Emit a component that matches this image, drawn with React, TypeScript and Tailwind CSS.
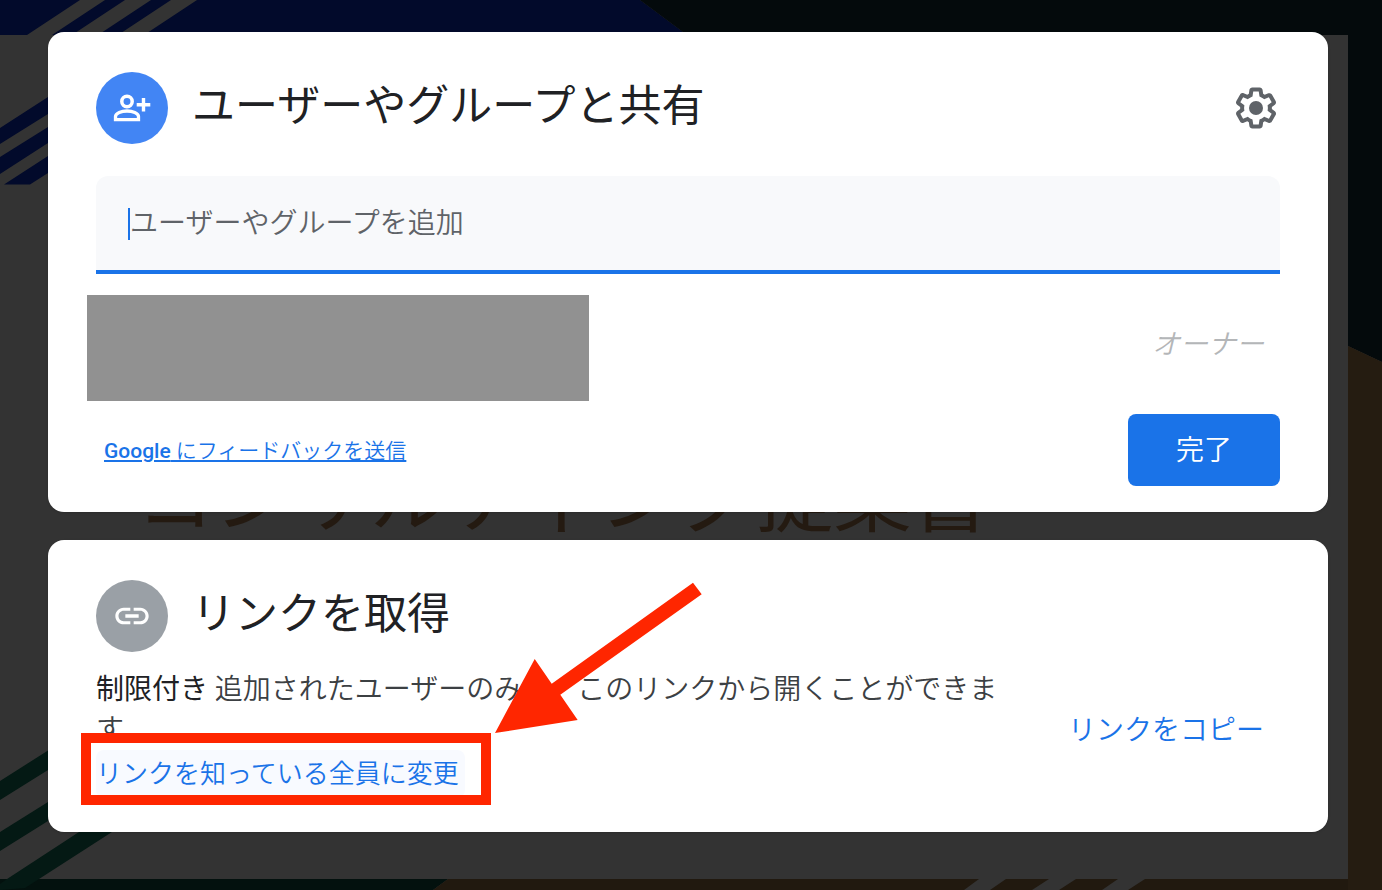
import { useState } from 'react';
import { MdLink } from 'react-icons/md';

function SlideBackground() {
  return (
    <svg
      className="absolute inset-0 h-full w-full"
      viewBox="0 0 1382 890"
      preserveAspectRatio="xMinYMin slice"
      aria-hidden="true"
    >
      <rect width="1382" height="890" fill="#333333" />

      {/* Top band */}
      <path d="M0 0H640L687 35H0Z" fill="#020a2b" />
      <path d="M640 0H1382V362L1348 346V35H687Z" fill="#040a0c" />
      <path d="M80 0H105L52 35H27ZM125 0H151L98 35H72ZM171 0H197L144 35H118Z" fill="#333333" />

      {/* Navy stripes */}
      <path d="M0 128L48 97V114L0 144ZM0 157L48 127V143L0 174ZM4 184.500L48 156V173L30 184.500Z" fill="#020a2b" />

      {/* Green stripes and bottom band */}
      <path d="M0 781L48 750.500V770L0 800ZM0 832L48 802V821L0 851ZM79 832H112L39 879H7Z" fill="#041914" />
      <path d="M0 879H448L433 890H0Z" fill="#03110e" />
      <path d="M448 879H1348V890H433Z" fill="#21190f" />
      <path d="M7 879H39L25 888L0 890V884Z" fill="#041914" />
      <path d="M1348 346L1382 362V890H1348Z" fill="#251c11" />
      <path d="M979 879H1006L990 890H964ZM1049 879H1076L1059 890H1032ZM1118 879H1145L1128 890H1102Z" fill="#333333" />

      <text x="136" y="526" fontSize="78" fill="#241a11">
        コンサルティング提案書
      </text>
    </svg>
  );
}

function PersonAddIcon() {
  return (
    <svg className="h-10 w-10" viewBox="0 0 40 40" fill="none" stroke="white" aria-hidden="true">
      <circle cx="15" cy="13.500" r="5.200" strokeWidth="3.500" />
      <path d="M3.500 31.700V28.600C3.500 25.200 9.500 23 15 23S26.500 25.200 26.500 28.600V31.700Z" strokeWidth="3.300" />
      <path d="M31.500 10V23.500M24.700 16.700H38.300" strokeWidth="3.400" />
    </svg>
  );
}

function GearIcon() {
  return (
    <svg className="h-12 w-12" viewBox="0 0 24 24" fill="#5f6368" aria-hidden="true">
      <path d="M13.850 22.250h-3.700c-.74 0-1.360-.54-1.450-1.270l-.27-1.890c-.27-.14-.53-.29-.79-.46l-1.800.72c-.7.26-1.470-.03-1.810-.65L2.200 15.530c-.35-.66-.2-1.440.36-1.880l1.530-1.190c-.01-.15-.02-.3-.02-.46 0-.15.01-.31.02-.46l-1.520-1.190c-.59-.45-.74-1.260-.37-1.880l1.850-3.190c.34-.62 1.110-.9 1.790-.63l1.810.73c.26-.17.52-.32.78-.46l.27-1.910c.09-.7.71-1.250 1.440-1.250h3.700c.74 0 1.360.54 1.450 1.270l.27 1.890c.27.14.53.29.79.46l1.800-.72c.71-.26 1.480.03 1.820.65l1.840 3.180c.36.66.2 1.440-.36 1.880l-1.520 1.190c.01.15.02.3.02.46s-.01.31-.02.46l1.520 1.190c.56.45.72 1.230.37 1.860l-1.860 3.220c-.34.62-1.110.9-1.800.63l-1.800-.72c-.26.17-.52.32-.78.46l-.27 1.910c-.1.68-.72 1.220-1.460 1.220zm-3.230-2h2.760l.37-2.550.53-.22c.44-.18.88-.44 1.340-.78l.45-.34 2.380.96 1.380-2.400-2.030-1.580.07-.56c.03-.26.06-.51.06-.78s-.03-.53-.06-.78l-.07-.56 2.030-1.580-1.390-2.400-2.390.96-.45-.35c-.42-.32-.87-.58-1.330-.77l-.52-.22-.37-2.550h-2.760l-.37 2.550-.53.21c-.44.19-.88.44-1.340.79l-.45.33-2.380-.95-1.390 2.390 2.030 1.580-.07.56a7 7 0 0 0-.06.79c0 .26.02.53.06.78l.07.56-2.030 1.580 1.380 2.400 2.390-.96.45.35c.43.33.86.58 1.330.77l.53.22.38 2.550z" />
      <circle cx="12" cy="12" r="3.500" />
    </svg>
  );
}

export default function App() {
  const [people, setPeople] = useState('');

  return (
    <div
      lang="ja"
      className="relative min-h-screen overflow-hidden bg-[#333333] font-[Roboto,'Noto_Sans_CJK_JP',sans-serif] text-[#202124]"
    >
      <SlideBackground />

      <main className="relative flex flex-col gap-7 pt-8 pr-[54px] pb-14 pl-12">
        {/* Share with people and groups */}
        <section className="rounded-2xl bg-white px-12 pt-10 pb-[26px] shadow-sm">
          <header className="flex items-center">
            <div className="flex h-18 w-18 items-center justify-center rounded-full bg-[#4285f4]">
              <PersonAddIcon />
            </div>
            <h1 className="ml-6 pb-1 text-[43px] leading-[60px]">ユーザーやグループと共有</h1>
            <button type="button" aria-label="設定" className="ml-auto">
              <GearIcon />
            </button>
          </header>

          <div className="mt-8 flex h-[98px] items-center rounded-t-xl border-b-4 border-[#1a73e8] bg-[#f8f9fb] px-8 pt-0.5">
            {people === '' && <span className="h-8 w-0.5 bg-[#1a73e8]" />}
            <input
              type="text"
              aria-label="ユーザーやグループを追加"
              placeholder="ユーザーやグループを追加"
              value={people}
              onChange={(e) => setPeople(e.target.value)}
              className="min-w-0 flex-1 bg-transparent text-[28px] leading-10 font-[350] outline-none placeholder:text-[#5f6368]"
            />
          </div>

          <div className="mt-[21px] flex items-center justify-between">
            <div className="-ml-[9px] h-[106px] w-[502px] bg-[#919191]" />
            <span className="pr-4 pb-1.5 text-[28px] leading-10 font-[350] text-[#b4b6b8] italic">オーナー</span>
          </div>

          <footer className="mt-[13px] flex items-center justify-between">
            <a href="#feedback" className="ml-2 pt-0.5 text-[21px] leading-8 font-[350] text-[#1a73e8] underline">
              <span className="font-medium">Google</span> にフィードバックを送信
            </a>
            <button
              type="button"
              className="h-18 w-[152px] rounded-lg bg-[#1a73e8] pt-0.5 text-[28px] font-[350] text-white"
            >
              完了
            </button>
          </footer>
        </section>

        {/* Get link */}
        <section className="relative rounded-2xl bg-white px-12 pt-10 pb-[34px] shadow-sm">
          <header className="flex items-center">
            <div className="flex h-18 w-18 items-center justify-center rounded-full bg-[#9aa0a6]">
              <MdLink className="h-10 w-10 text-white" />
            </div>
            <h2 className="ml-6 pb-1 text-[43px] leading-[60px]">リンクを取得</h2>
          </header>

          <div className="mt-[18px] flex items-center justify-between">
            <div className="max-w-[920px]">
              <p className="text-[28px] leading-10 font-[350] text-[#3c4043]">
                <span className="font-normal text-[#202124]">制限付き</span> 追加されたユーザーのみで、このリンクから開くことができます
              </p>
              <div className="relative flex w-fit">
                <button
                  type="button"
                  className="h-12 rounded-lg bg-[#f8faff] pr-1.5 text-[26px] font-[350] text-[#1a73e8]"
                >
                  リンクを知っている全員に変更
                </button>
                <span className="absolute -top-[17px] -right-[26px] -bottom-[7px] -left-[15px] border-10 border-[#ff2600]" />
              </div>
            </div>
            <button
              type="button"
              className="pr-4 pb-1.5 text-[28px] leading-10 font-[350] whitespace-nowrap text-[#1a73e8]"
            >
              リンクをコピー
            </button>
          </div>

          {/* Arrow pointing at the change link */}
          <svg
            className="pointer-events-none absolute top-10 left-[446px]"
            width="210"
            height="156"
            viewBox="0 0 210 156"
            aria-hidden="true"
          >
            <path
              d="M1 153L40.700 79L57.700 103.700L199 2.700L207.700 14.300L66.300 114.700L83.700 140Z"
              fill="#ff2600"
            />
          </svg>
        </section>
      </main>
    </div>
  );
}
